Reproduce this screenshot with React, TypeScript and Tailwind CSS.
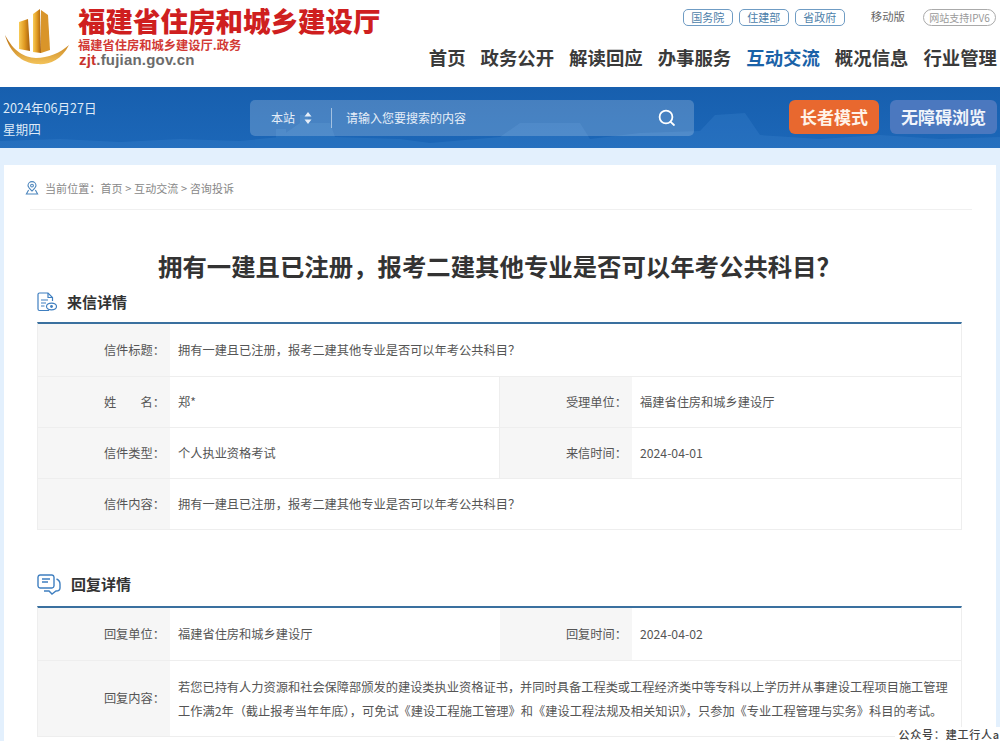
import React from "react";

const cjk = { fontFamily: '"Noto Sans CJK SC", "Liberation Sans", sans-serif' };

function Logo() {
  return (
    <svg width="66" height="60" viewBox="0 0 66 60" className="shrink-0">
      <defs>
        <linearGradient id="b" x1="0" x2="1" y1="0" y2="0">
          <stop offset="0" stopColor="#f8cc58" />
          <stop offset="0.5" stopColor="#e09a22" />
          <stop offset="1" stopColor="#a85f0c" />
        </linearGradient>
        <linearGradient id="s" x1="0" x2="0" y1="0" y2="1">
          <stop offset="0" stopColor="#b86c0c" />
          <stop offset="1" stopColor="#f3c35a" />
        </linearGradient>
      </defs>
      <path d="M15 14 L24 11 L26 43 L15 41 Z" fill="url(#b)" />
      <path d="M29 6 L36 1 L37 45 L29 44 Z" fill="url(#b)" />
      <path d="M37 2 L44 7 L46 42 L37 45 Z" fill="#d9952a" />
      <path d="M1 27 C10 44 20 49 32 50 C44 50 56 45 65 37 C57 53 44 57 33 56 C18 55 6 45 1 27 Z" fill="url(#s)" />
    </svg>
  );
}

function Skyline() {
  return (
    <svg className="absolute inset-0 w-full h-full" viewBox="0 0 1000 61" preserveAspectRatio="none">
      <g fill="#5ba3e4" opacity="0.16">
        <path d="M0 61 L0 54 L60 52 L120 55 L180 52 L240 54 L280 50 L300 36 L330 36 L335 50 L400 52 L430 56 L500 50 L520 36 L580 36 L590 52 L640 46 L700 44 L715 28 L745 26 L760 48 L820 52 L880 48 L940 52 L1000 50 L1000 61 Z" />
        <rect x="276" y="42" width="10" height="19" />
        <rect x="300" y="28" width="8" height="33" />
      </g>
    </svg>
  );
}

function Cell({ label, children, spaced }: { label: string; children: React.ReactNode; spaced?: boolean }) {
  return (
    <>
      <div className="w-[132px] shrink-0 bg-[#f6f6f6] flex items-center justify-end pr-[5px] text-[#555]">
        {spaced ? (
          <span className="flex w-[61px] justify-between"><span>姓</span><span>名：</span></span>
        ) : (
          label
        )}
      </div>
      <div className="flex-1 min-w-0 flex items-center px-[8px] text-[#555]">{children}</div>
    </>
  );
}

function Row({ h, children, last }: { h: string; children: React.ReactNode; last?: boolean }) {
  return <div className={`flex ${h} ${last ? "" : "border-b border-[#eeeeee]"}`}>{children}</div>;
}

export default function App() {
  const q = "拥有一建且已注册，报考二建其他专业是否可以年考公共科目？";
  return (
    <div className="relative w-[1000px] h-[741px] overflow-hidden bg-[#e3f0fd] text-[12.22px]" style={cjk}>
      <header className="h-[87px] bg-white flex justify-between pl-[4px] pr-[3px]">
        <div className="flex">
          <div className="pt-[8px]"><Logo /></div>
          <div className="ml-[8px] pt-[2px]">
            <div className="text-[27.5px] leading-[36px] font-black text-[#cf1f1f] whitespace-nowrap">福建省住房和城乡建设厅</div>
            <div className="text-[12.25px] leading-[14px] font-bold text-[#d23a35] whitespace-nowrap">福建省住房和城乡建设厅.政务</div>
            <div className="-mt-[2px] ml-[1px] text-[15px] leading-[19px] tracking-[0.2px] font-bold text-[#6b6b6b]" style={{ fontFamily: '"Liberation Sans", sans-serif' }}>
              <span className="text-[#c8322d]">zjt</span>.fujian.gov.cn
            </div>
          </div>
        </div>
        <div className="w-[574px] flex flex-col items-end">
          <div className="flex items-center pt-[8px] h-[26px] mr-[1px]">
            <div className="flex gap-[6px]">
              {["国务院", "住建部", "省政府"].map((t) => (
                <span key={t} className="w-[50px] h-[17px] rounded-[5px] border border-[#6f9cc4] text-[#4c7ea9] text-[11px] leading-[15px] text-center">{t}</span>
              ))}
            </div>
            <span className="ml-[26px] text-[#666] text-[11.4px]">移动版</span>
            <span className="ml-[18px] w-[73px] h-[17px] rounded-full border border-[#aaa] text-[#999] text-[10px] leading-[15px] text-center">网站支持IPV6</span>
          </div>
          <nav className="mt-[19px] flex gap-[15px] text-[18.4px] leading-[24px] font-bold text-[#3a3a3a] whitespace-nowrap">
            <span>首页</span>
            <span>政务公开</span>
            <span>解读回应</span>
            <span>办事服务</span>
            <span className="text-[#1a62a8]">互动交流</span>
            <span>概况信息</span>
            <span>行业管理</span>
          </nav>
        </div>
      </header>

      <div className="relative h-[61px] bg-gradient-to-b from-[#175fae] to-[#1c67b8] text-white">
        <Skyline />
        <div className="relative flex items-center h-full pl-[3px] pr-[3px]">
          <div className="w-[247px] text-[12.6px] leading-[21px] text-[#dfeaf7]">
            <div>2024年06月27日</div>
            <div>星期四</div>
          </div>
          <div className="w-[444px] h-[36px] mt-[1px] rounded-[5px] bg-white/20 flex items-center pl-[21px] pr-[18px] text-[12px] text-[#e6eef8]">
            <span>本站</span>
            <svg width="8" height="14" viewBox="0 0 8 14" className="ml-[9px]"><path d="M4 1 L7.5 5.5 H.5 Z M4 13 L7.5 8.5 H.5 Z" fill="#e6eef8" /></svg>
            <span className="w-px h-[20px] bg-white/50 ml-[19px]" />
            <span className="ml-[14px] flex-1">请输入您要搜索的内容</span>
            <svg width="18" height="18" viewBox="0 0 18 18" fill="none" stroke="#fff" strokeWidth="1.8" strokeLinecap="round"><circle cx="8" cy="8" r="6.4" /><path d="M12.6 12.8 L16 16" /></svg>
          </div>
          <div className="ml-[95px] w-[90px] h-[34px] -mt-[1px] rounded-[6px] bg-[#e8682f] flex items-center justify-center text-[17px] font-bold text-[#fff3e8]">长者模式</div>
          <div className="ml-[11px] w-[107px] h-[34px] -mt-[1px] rounded-[6px] bg-[#4b78bf] flex items-center justify-center text-[17px] font-bold text-[#f1f5fb]">无障碍浏览</div>
        </div>
      </div>

      <main className="mt-[17px] mx-[4px] w-[992px] h-[700px] bg-white pt-[14px] px-[33px]">
        <div className="-ml-[12px] flex items-center h-[18px] text-[11px] text-[#888]">
          <svg width="14" height="14" viewBox="0 0 14 14" fill="none" stroke="#4d86bd" strokeWidth="1.1">
            <path d="M7 10 C5 8 3 6.4 3 4.6 A4 4 0 0 1 11 4.6 C11 6.4 9 8 7 10 Z" />
            <circle cx="7" cy="4.6" r="1.4" />
            <path d="M3.6 9 L1.4 13 H12.6 L10.4 9" />
          </svg>
          <span className="ml-[6px] tracking-[0.1px]">当前位置：首页 &gt; 互动交流 &gt; 咨询投诉</span>
        </div>
        <div className="-ml-[7px] w-[942px] mt-[12px] border-t border-[#f0f0f0]" />
        <h1 className="mt-[40px] -ml-[5px] text-center w-[935px] text-[24.4px] leading-[32px] font-bold text-[#333] whitespace-nowrap">{q}</h1>

        <div className="h-[40px] flex items-center">
          <svg width="20" height="20" viewBox="0 0 20 20" fill="none" stroke="#3f7fc0" strokeWidth="1.2">
            <path d="M12 18.5 H2.5 A1.5 1.5 0 0 1 1 17 V2.5 A1.5 1.5 0 0 1 2.5 1 H11 L15.5 5.5 V9" />
            <path d="M11 1 V5.5 H15.5 M4 8 H11 M4 11 H9 M4 14 H7.5" />
            <ellipse cx="14.5" cy="14.5" rx="5" ry="3.4" fill="#fff" />
            <circle cx="14.5" cy="14.5" r="1.4" fill="#3f7fc0" stroke="none" />
          </svg>
          <span className="ml-[10px] text-[15px] font-bold text-[#333]">来信详情</span>
        </div>

        <section className="w-[925px] border-t-2 border-[#3a709f] border-x border-b border-x-[#eeeeee] border-b-[#eeeeee]">
          <Row h="h-[53px]"><Cell label="信件标题：">{q}</Cell></Row>
          <Row h="h-[51px]">
            <div className="w-[462px] flex border-r border-[#eeeeee]"><Cell label="姓名：" spaced>郑*</Cell></div>
            <Cell label="受理单位：">福建省住房和城乡建设厅</Cell>
          </Row>
          <Row h="h-[51px]">
            <div className="w-[462px] flex border-r border-[#eeeeee]"><Cell label="信件类型：">个人执业资格考试</Cell></div>
            <Cell label="来信时间：">2024-04-01</Cell>
          </Row>
          <Row h="h-[50px]" last><Cell label="信件内容：">{q}</Cell></Row>
        </section>

        <div className="mt-[33px] h-[43px] flex items-center">
          <svg width="24" height="22" viewBox="0 0 24 22" fill="none" stroke="#3f7fc0" strokeWidth="1.4">
            <path d="M3 1 H15 A2.2 2.2 0 0 1 17 3 V12 A2.2 2.2 0 0 1 15 14 H3 A2.2 2.2 0 0 1 1 12 V3 A2.2 2.2 0 0 1 3 1 Z" />
            <path d="M5 5 H13 M5 8 H11" />
            <path d="M19.5 5 C22 6 23 8 23 10 V14 C23 16 21 17 19 17 L15 20 L12 17 H7" />
          </svg>
          <span className="ml-[10px] text-[15px] font-bold text-[#333]">回复详情</span>
        </div>

        <section className="w-[925px] border-t-2 border-[#3a709f] border-x border-b border-x-[#eeeeee] border-b-[#eeeeee]">
          <Row h="h-[53px]">
            <div className="w-[462px] flex"><Cell label="回复单位：">福建省住房和城乡建设厅</Cell></div>
            <Cell label="回复时间：">2024-04-02</Cell>
          </Row>
          <Row h="h-[75px]" last>
            <Cell label="回复内容：">
              <p className="leading-[24px] whitespace-nowrap">
                若您已持有人力资源和社会保障部颁发的建设类执业资格证书，并同时具备工程类或工程经济类中等专科以上学历并从事建设工程项目施工管理<br />
                工作满2年（截止报考当年年底），可免试《建设工程施工管理》和《建设工程法规及相关知识》，只参加《专业工程管理与实务》科目的考试。
              </p>
            </Cell>
          </Row>
        </section>
      </main>

      <div className="absolute right-0 bottom-0 bg-white pl-[3px] text-[11px] leading-[14px] tracking-[0.8px] font-medium text-[#444] whitespace-nowrap">公众号：建工行人a</div>
    </div>
  );
}
